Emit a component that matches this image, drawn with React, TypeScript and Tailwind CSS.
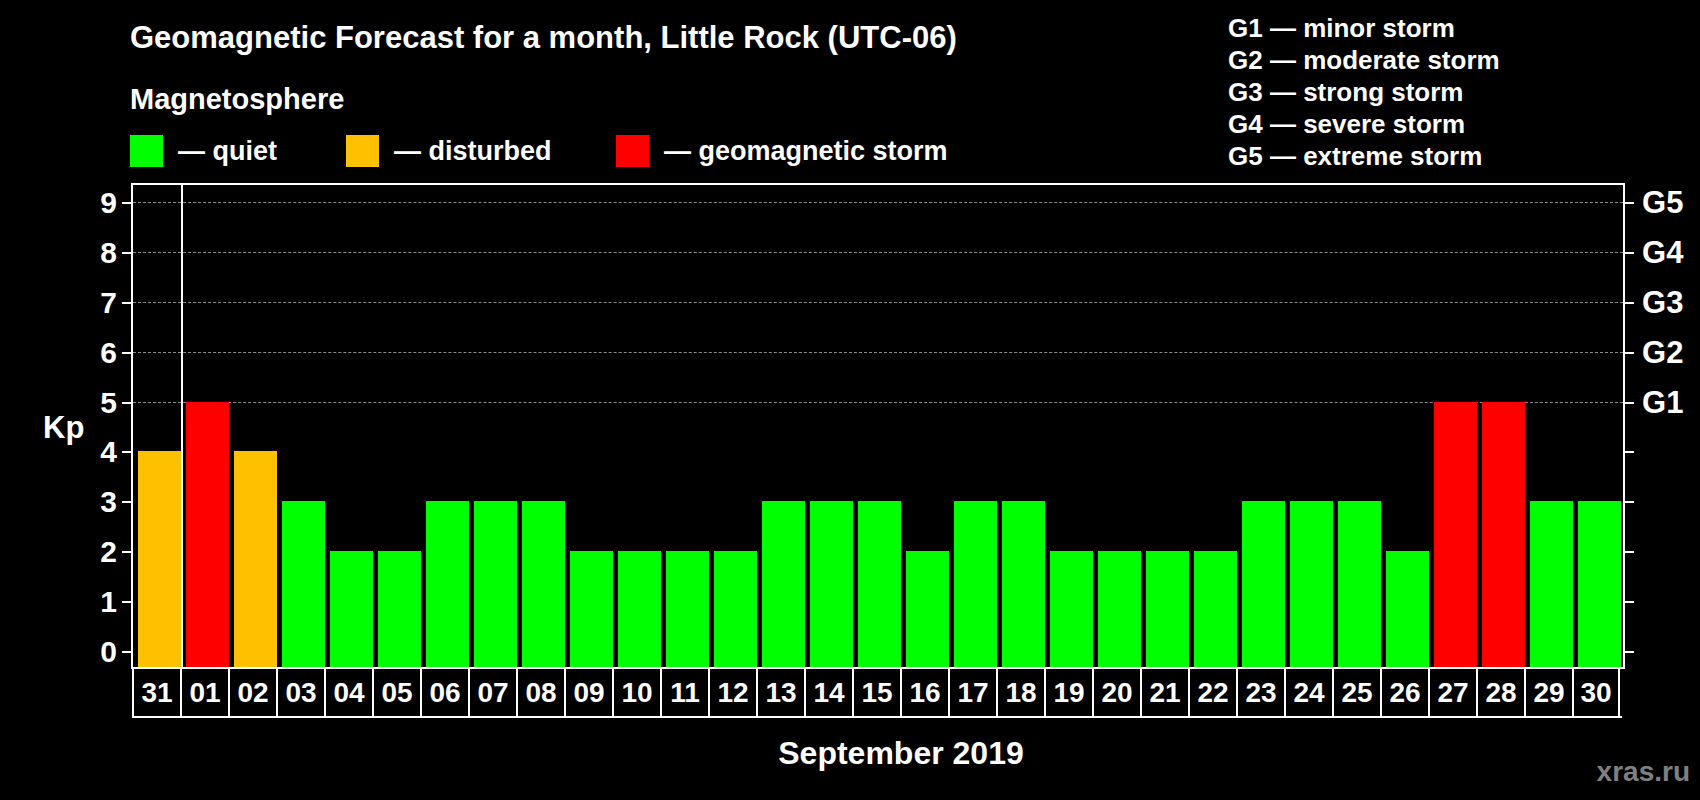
import React from "react";

const data = [4,5,4,3,2,2,3,3,3,2,2,2,2,3,3,3,2,3,3,2,2,2,2,3,3,3,2,5,5,3,3];
const labels = ["31", ...Array.from({ length: 30 }, (_, i) => String(i + 1).padStart(2, "0"))];
const color = (v: number) => (v >= 5 ? "#ff0000" : v === 4 ? "#ffc000" : "#00ff00");
const U = 49.9;
const yOf = (v: number) => 466 - U * v;

export default function App() {
  const font = { fontFamily: '"Liberation Sans", Arial, sans-serif' };
  return (
    <div className="relative w-[1700px] h-[800px] bg-black text-white font-bold overflow-hidden" style={font}>
      {/* header */}
      <div className="flex h-[183px]">
        <div className="w-[1228px] pl-[130px] pt-[21px]">
          <div className="text-[31px] leading-[34px]">Geomagnetic Forecast for a month, Little Rock (UTC-06)</div>
          <div className="mt-[28px] text-[29px] leading-[32px]">Magnetosphere</div>
          <div className="mt-[20px] flex items-center text-[27px] leading-[32px]">
            <div className="flex w-[216px] items-center gap-[15px]"><span className="w-[33px] h-[32px] bg-[#00ff00]" />— quiet</div>
            <div className="flex w-[270px] items-center gap-[15px]"><span className="w-[33px] h-[32px] bg-[#ffc000]" />— disturbed</div>
            <div className="flex items-center gap-[15px]"><span className="w-[33px] h-[32px] bg-[#ff0000]" />— geomagnetic storm</div>
          </div>
        </div>
        <div className="pt-[12px] text-[26px] leading-[32px]">
          <div>G1 — minor storm</div>
          <div>G2 — moderate storm</div>
          <div>G3 — strong storm</div>
          <div>G4 — severe storm</div>
          <div>G5 — extreme storm</div>
        </div>
      </div>

      {/* chart */}
      <div className="ml-[131px] w-[1494px]">
        <div className="relative h-[486px] border-2 border-white">
          {[9, 8, 7, 6, 5].map((v) => (
            <div key={v} className="absolute left-0 right-0 border-t border-dashed border-[#8c8c8c]" style={{ top: yOf(v) }} />
          ))}
          <div className="absolute top-0 bottom-0 left-[48px] w-[2px] bg-white" />
          <div className="relative flex h-full items-end pl-[1px]">
            {data.map((v, i) => (
              <div key={i} className="w-[48px] shrink-0 flex">
                <div className="ml-[4px] w-[43px]" style={{ height: 16 + U * v, background: color(v) }} />
              </div>
            ))}
          </div>
          {Array.from({ length: 10 }, (_, v) => (
            <React.Fragment key={v}>
              <div className="absolute left-[-11px] w-[9px] h-[2px] bg-white" style={{ top: yOf(v) }} />
              <div className="absolute right-[-11px] w-[9px] h-[2px] bg-white" style={{ top: yOf(v) }} />
              <div className="absolute left-[-64px] w-[48px] text-right text-[30px] leading-[34px]" style={{ top: yOf(v) - 16 }}>{v}</div>
              {v >= 5 && (
                <div className="absolute left-[1509px] text-[31px] leading-[34px]" style={{ top: yOf(v) - 16 }}>G{v - 4}</div>
              )}
            </React.Fragment>
          ))}
          <div className="absolute left-[-90px] text-[31px] leading-[34px]" style={{ top: 226 }}>Kp</div>
        </div>
        <div className="ml-[1px] flex w-[1490px] border-b-2 border-white">
          {labels.map((l, i) => (
            <div key={i} className={`w-[48px] h-[47px] shrink-0 border-l-2 border-white flex items-center justify-center text-[28px] ${i === 30 ? "border-r-2" : ""}`}>{l}</div>
          ))}
        </div>
        <div className="mt-[18px] pl-[46px] text-center text-[32px] leading-[34px]">September 2019</div>
      </div>

      <div className="absolute right-[10px] bottom-[12px] text-[28px] leading-[32px] text-[#808080]">xras.ru</div>
    </div>
  );
}
